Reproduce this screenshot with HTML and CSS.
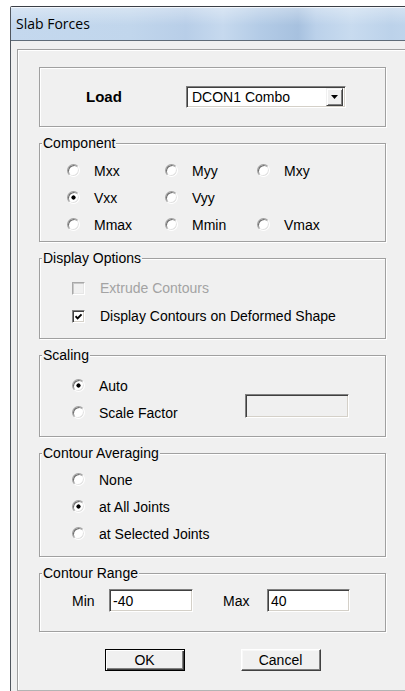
FILE: index.html
```html
<!DOCTYPE html>
<html lang="en">
<head>
<meta charset="utf-8">
<title>Slab Forces</title>
<link rel="stylesheet" href="styles.css">
</head>
<body>
<div class="window">
  <div class="titlebar"><span class="title">Slab Forces</span></div>
  <div class="frame">
    <div class="panel">

      <div class="group group-load">
        <span class="load-label">Load</span>
        <div class="combo">
          <span class="combo-value">DCON1 Combo</span>
          <span class="combo-button">
            <svg width="7" height="4" viewBox="0 0 7 4"><path d="M0 0h7L3.5 4z" fill="#000"/></svg>
          </span>
        </div>
      </div>

      <div class="group group-component">
        <span class="group-title">Component</span>
        <div class="option-grid">
          <div class="option"><span class="radio"></span>Mxx</div>
          <div class="option"><span class="radio"></span>Myy</div>
          <div class="option"><span class="radio"></span>Mxy</div>
          <div class="option"><span class="radio on"></span>Vxx</div>
          <div class="option"><span class="radio"></span>Vyy</div>
          <div class="option"></div>
          <div class="option"><span class="radio"></span>Mmax</div>
          <div class="option"><span class="radio"></span>Mmin</div>
          <div class="option"><span class="radio"></span>Vmax</div>
        </div>
      </div>

      <div class="group group-display">
        <span class="group-title">Display Options</span>
        <div class="rows rows-display">
          <div class="option disabled"><span class="check"></span>Extrude Contours</div>
          <div class="option"><span class="check on">
            <svg width="7" height="7" viewBox="0 0 7 7"><path d="M0.5 3.2L2.6 5.3L6.5 1.3" fill="none" stroke="#000" stroke-width="1.9"/></svg>
          </span>Display Contours on Deformed Shape</div>
        </div>
      </div>

      <div class="group group-scaling">
        <span class="group-title">Scaling</span>
        <div class="scaling-grid">
          <div class="option"><span class="radio on"></span>Auto</div>
          <div class="option"><span class="radio"></span>Scale Factor</div>
          <div class="field field-scale"></div>
        </div>
      </div>

      <div class="group group-averaging">
        <span class="group-title">Contour Averaging</span>
        <div class="rows rows-averaging">
          <div class="option"><span class="radio"></span>None</div>
          <div class="option"><span class="radio on"></span>at All Joints</div>
          <div class="option"><span class="radio"></span>at Selected Joints</div>
        </div>
      </div>

      <div class="group group-range">
        <span class="group-title">Contour Range</span>
        <div class="range-row">
          <span class="range-label range-min">Min</span>
          <div class="field field-min">-40</div>
          <span class="range-label range-max">Max</span>
          <div class="field field-max">40</div>
        </div>
      </div>

      <div class="buttons">
        <button class="btn btn-default" type="button">OK</button>
        <button class="btn" type="button">Cancel</button>
      </div>

    </div>
  </div>
</div>
</body>
</html>
```

FILE: styles.css
```css
* {
  box-sizing: border-box;
}

html,
body {
  margin: 0;
  padding: 0;
}

body {
  width: 405px;
  height: 691px;
  overflow: hidden;
  background: #fff;
  font-family: "Liberation Sans", Arial, sans-serif;
  font-size: 14px;
  line-height: 16px;
  color: #000;
}

/* window chrome; the right side runs on past the edge, so it has no right border */
.window {
  margin: 6px 0 0 10px;
  width: 395px;
  border-top: 1px solid #3b3f46;
  border-left: 1px solid #50565e;
  border-top-left-radius: 2px;
}

.titlebar {
  height: 34px;
  padding-left: 5px;
  display: flex;
  align-items: center;
  border-bottom: 1px solid #5f6b78;
  background:
    linear-gradient(180deg, rgba(255, 255, 255, 0.35), rgba(255, 255, 255, 0) 55%),
    linear-gradient(90deg, #c4d8ee 0, #c1d6ec 120px, #b8cee8 175px, #c6d9ee 212px,
      #b3cbe6 250px, #a7c1df 287px, #bbd1ea 305px, #c8dbef 340px, #bcd2ea 380px, #c4d8ee 420px);
  box-shadow: inset 0 1px 0 rgba(255, 255, 255, 0.7);
}

.title {
  font-family: "Open Sans", "Noto Sans", sans-serif;
  font-size: 14px;
  color: #000;
}

.frame {
  height: 650px;
  padding: 8px 0 0 6px;
  background: #f0f0f0;
}

.panel {
  height: 642px;
  padding: 17px 0 0 21px;
  display: flex;
  flex-direction: column;
  align-items: flex-start;
  gap: 16px;
  border-top: 1px solid #a0a0a0;
  border-left: 1px solid #a0a0a0;
  border-bottom: 1px solid #b4b4b4;
  box-shadow: inset 1px 1px 0 #fff;
}

/* etched group boxes */
.group {
  width: 347px;
  display: flex;
  flex-direction: column;
  border: 1px solid #a0a0a0;
  box-shadow: inset 1px 1px 0 #fff, 1px 1px 0 #fff;
}

.group-title {
  align-self: flex-start;
  margin: -9px 0 0 2px;
  padding: 0 1px;
  background: #f0f0f0;
}

.group-load {
  height: 60px;
  flex-direction: row;
  align-items: center;
  padding-left: 46px;
}

.group-component { height: 99px; }
.group-display { height: 81px; }
.group-scaling { height: 82px; }
.group-averaging { height: 104px; }
.group-range { height: 59px; }

.load-label {
  width: 100px;
  font-weight: bold;
  font-size: 15px;
}

/* combo box */
.combo {
  width: 160px;
  height: 22px;
  display: flex;
  align-items: center;
  background: #fff;
  border: 1px solid;
  border-color: #808080 #fff #fff #808080;
  box-shadow: inset 1px 1px 0 #404040, inset -1px -1px 0 #d4d0c8;
  padding: 1px 2px 1px 5px;
}

.combo-value {
  flex: 1;
}

.combo-button {
  width: 17px;
  height: 18px;
  display: flex;
  align-items: center;
  justify-content: center;
  background: #f0f0f0;
  border: 1px solid;
  border-color: #f0f0f0 #404040 #404040 #f0f0f0;
  box-shadow: inset 1px 1px 0 #fff, inset -1px -1px 0 #808080;
}

/* options */
.option {
  display: flex;
  align-items: center;
  gap: 14px;
  height: 27px;
  white-space: nowrap;
}

.option.disabled {
  color: #a3a3a3;
}

.radio {
  flex: none;
  width: 13px;
  height: 13px;
  border-radius: 50%;
  border: 1px solid;
  border-color: #a0a0a0 #fff #fff #a0a0a0;
  background: #fff;
  box-shadow: inset 1px 1px 0 #6e6e6e, inset -1px -1px 0 #e2e2e2;
}

.radio.on {
  background: radial-gradient(circle, #000 0, #000 1.8px, #fff 2.4px);
}

.check {
  flex: none;
  width: 13px;
  height: 13px;
  display: flex;
  align-items: center;
  justify-content: center;
  background: #fff;
  border: 1px solid;
  border-color: #808080 #fff #fff #808080;
  box-shadow: inset 1px 1px 0 #404040, inset -1px -1px 0 #d4d0c8;
}

.disabled .check {
  background: #f0f0f0;
  border-color: #a8a8a8 #fff #fff #a8a8a8;
  box-shadow: inset 1px 1px 0 #c8c8c8, inset -1px -1px 0 #e6e6e6;
}

.option-grid {
  display: grid;
  grid-template-columns: 98px 92px 1fr;
  margin-top: 6px;
  padding-left: 27px;
}

.rows {
  display: flex;
  flex-direction: column;
  padding-left: 32px;
}

.rows-display {
  margin-top: 8px;
}

.rows-display .option {
  height: 28px;
  gap: 15px;
}

.rows-averaging {
  margin-top: 5px;
}

.scaling-grid {
  display: grid;
  grid-template-columns: 1fr 104px;
  grid-template-rows: 27px 27px;
  margin-top: 9px;
  padding: 0 36px 0 32px;
}

.scaling-grid .option {
  grid-column: 1;
}

/* text fields */
.field {
  height: 24px;
  display: flex;
  align-items: center;
  padding: 0 3px;
  background: #fff;
  border: 1px solid;
  border-color: #808080 #fff #fff #808080;
  box-shadow: inset 1px 1px 0 #404040, inset -1px -1px 0 #d4d0c8;
}

.field-scale {
  grid-column: 2;
  grid-row: 1 / span 2;
  align-self: end;
  margin-bottom: 8px;
  background: #f0f0f0;
}

.range-row {
  display: flex;
  align-items: center;
  margin-top: 8px;
  padding-left: 32px;
}

.range-min {
  width: 37px;
}

.range-max {
  width: 44px;
  margin-left: 30px;
}

.field-min {
  width: 84px;
  height: 23px;
}

.field-max {
  width: 83px;
  height: 23px;
}

/* push buttons */
.buttons {
  width: 347px;
  display: flex;
  justify-content: center;
  gap: 56px;
  margin-top: 1px;
}

.btn {
  width: 80px;
  height: 22px;
  padding: 0;
  font-family: "Liberation Sans", Arial, sans-serif;
  font-size: 14px;
  color: #000;
  background: #f0f0f0;
  border: 1px solid;
  border-color: #fff #404040 #404040 #fff;
  box-shadow: inset -1px -1px 0 #808080, inset 1px 1px 0 #f8f8f8;
}

.btn-default {
  border-color: #000;
  box-shadow: inset 1px 1px 0 #fff, inset -1px -1px 0 #404040, inset -2px -2px 0 #808080;
}
```
